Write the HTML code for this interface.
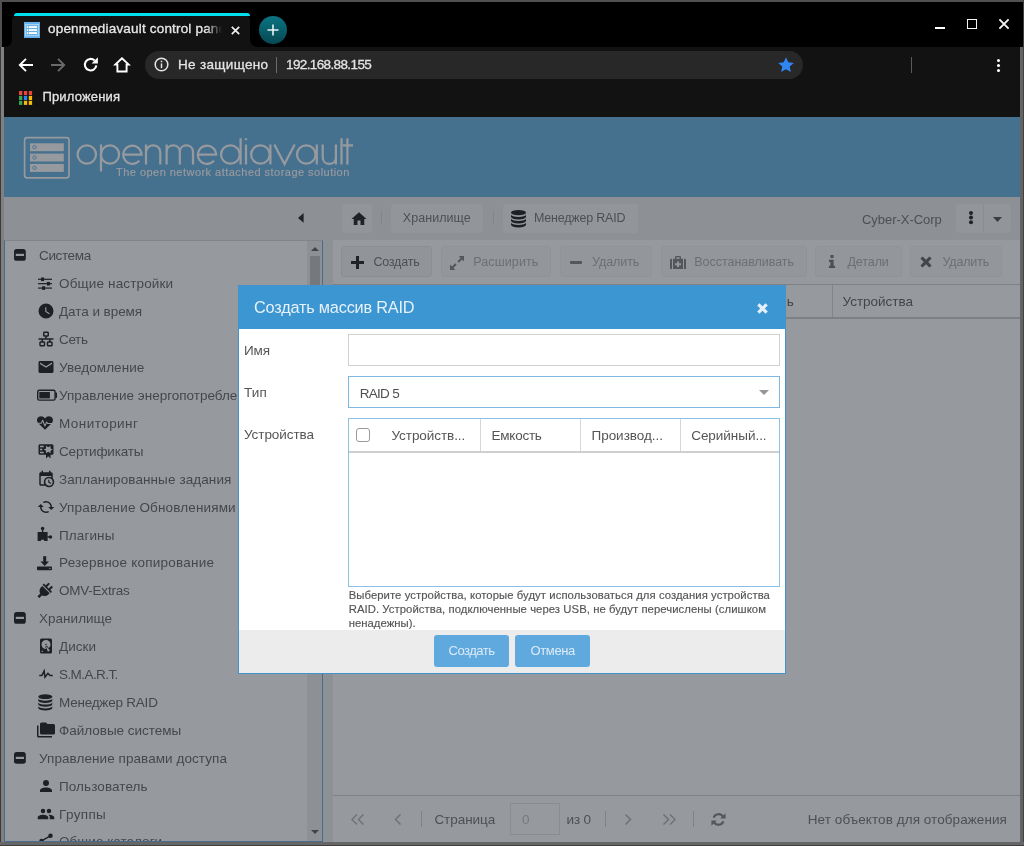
<!DOCTYPE html>
<html lang="ru">
<head>
<meta charset="utf-8">
<title>openmediavault control panel</title>
<style>
*{box-sizing:border-box;margin:0;padding:0}
html,body{width:1024px;height:846px;overflow:hidden}
body{background:#000;font-family:"Liberation Sans",sans-serif;font-size:13px;color:#404040;position:relative}
.abs{position:absolute}
#root{position:absolute;left:0;top:0;width:1024px;height:846px;filter:opacity(1);will-change:transform}
svg{display:block}
/* window frame */
#frame-l{left:0;top:47px;width:4px;height:799px;background:linear-gradient(to right,#3a3a3a 0,#3a3a3a 1px,#808080 1.1px)}
#frame-r{left:1020px;top:47px;width:4px;height:799px;background:#646464;border-right:1px solid #424242}
#frame-b{left:0;top:841.6px;width:1024px;height:4.4px;background:#666;border-bottom:1.1px solid #404040}
#frame-t{left:0;top:0;width:1024px;height:1.8px;background:#505050}
#frame-tl{left:0;top:0;width:1.8px;height:47px;background:#505050}
#frame-tr{left:1022.6px;top:0;width:1.4px;height:47px;background:#404040}
/* browser chrome */
#titlebar{left:0;top:2px;width:1024px;height:45px;background:#000}
#tab{left:12px;top:15px;width:238px;height:32px;background:#121212;border-radius:5px 5px 0 0}
#tabline{left:13.6px;top:12.8px;width:236px;height:3.5px;background:#00e0ee;border-radius:4px 4px 0 0}
#tabtitle{left:48px;top:21px;font-size:13.5px;color:#e8e8e8;-webkit-text-stroke:.3px #e8e8e8;letter-spacing:.18px;white-space:nowrap;width:175px;overflow:hidden;-webkit-mask-image:linear-gradient(to right,#000 158px,transparent 174px);mask-image:linear-gradient(to right,#000 158px,transparent 174px)}
#navbar{left:4px;top:47px;width:1016px;height:70px;background:#121212}
#omni{left:145px;top:51px;width:658px;height:28px;border-radius:14px;background:#282828}
.ctext{color:#e4e4e4;font-size:13.5px;white-space:nowrap;-webkit-text-stroke:.3px #e4e4e4}
/* page */
#page{left:4px;top:117px;width:1016px;height:724.6px;background:#ececec;overflow:hidden}
#hdr{left:0;top:0;width:1016px;height:79.6px;background:#5cacdf}
#bar{left:0;top:79.6px;width:1016px;height:43.4px;background:#ececec}
#side{left:0;top:123px;width:319px;height:601.8px;background:#fff;border:1px solid #5fa2dd;border-top-color:#d4d4d4;overflow:hidden}
#main{left:329px;top:123px;width:687px;height:602px;background:#fff;overflow:hidden}
#mask{left:0;top:0;width:1016px;height:725px;background:rgba(45,51,61,.5)}
/* tree */
.row{position:absolute;left:0;height:28px;width:303px;white-space:nowrap;font-size:13.6px;color:#404040;line-height:28px}
.row .t{position:absolute;left:54px;top:0}
.row.cat .t{left:34px}
.row .ic{position:absolute;left:32px;top:6px;width:16px;height:16px}
.row.cat .ic{left:9px;top:7px;width:13px;height:13px}
/* buttons */
.btn{position:absolute;height:31px;background:#f5f5f5;border:1px solid #e6e6e6;border-radius:3px;font-size:13px;color:#666;line-height:29px;white-space:nowrap}
.btn.dis{color:#a9a9a9}
/* modal */
#modal{left:233.7px;top:168.4px;width:548.6px;height:388.8px;background:#fff;border:1px solid #4392d0}
#mhead{left:0;top:0;width:546.6px;height:42.2px;background:#3c96d2}
#mfoot{left:0;top:343.8px;width:546.6px;height:43px;background:#ececec}
.lbl{position:absolute;left:6px;font-size:13.6px;color:#555}
.fld{position:absolute;left:110px;width:432px;height:32px;border:1px solid #cfcfcf;background:#fff}
.mbtn{position:absolute;top:350px;width:75px;height:32px;border-radius:3px;background:#5fa9de;color:#e4eff9;font-size:13.6px;text-align:center;line-height:32px}

.tx{position:absolute;white-space:nowrap;line-height:18px;height:18px}
.tb{position:absolute;background:#f5f5f5;border:1px solid #e6e6e6;border-radius:3px}
.tbb{border-color:#f6f6f6;background:#f6f6f6}
</style>
</head>
<body>
<div id="root">
<div id="titlebar" class="abs"></div>
<div id="frame-t" class="abs"></div><div id="frame-tl" class="abs"></div><div id="frame-tr" class="abs"></div>
<div id="tab" class="abs"></div><div id="tabline" class="abs"></div>
<div id="tabtitle" class="abs">openmediavault control panel</div>
<div id="navbar" class="abs"></div>
<div id="omni" class="abs"></div>

<!-- tab foot curves -->
<svg class="abs" style="left:3px;top:39px" width="10" height="8"><path d="M0 8 Q9 8 9 0 L10 0 L10 8 Z" fill="#121212"/></svg>
<svg class="abs" style="left:249px;top:39px" width="10" height="8"><path d="M10 8 Q1 8 1 0 L0 0 L0 8 Z" fill="#121212"/></svg>
<!-- favicon -->
<svg class="abs" style="left:24px;top:22px" width="16" height="16" viewBox="0 0 16 16"><rect width="16" height="16" fill="#62b0ec"/><rect x="1.4" y="2.4" width="13.2" height="11.4" fill="#7dbdee" stroke="#b4daf6" stroke-width=".8"/><rect x="2.4" y="3.3" width="11.2" height="9.6" fill="#67ade2"/><g fill="#fff"><rect x="2.9" y="4.1" width="1.1" height="1.8"/><rect x="4.7" y="4.1" width="8.3" height="1.8"/><rect x="2.9" y="7.1" width="1.1" height="1.8"/><rect x="4.7" y="7.1" width="8.3" height="1.8"/><rect x="2.9" y="10.1" width="1.1" height="1.9"/><rect x="4.7" y="10.1" width="8.3" height="1.9"/></g></svg>
<!-- tab close -->
<svg class="abs" style="left:231px;top:26px" width="9" height="9" viewBox="0 0 9 9"><path d="M0.8 0.8L8.2 8.2M8.2 0.8L0.8 8.2" stroke="#f0f0f0" stroke-width="1.7"/></svg>
<!-- new tab -->
<div class="abs" style="left:259px;top:16px;width:28px;height:28px;border-radius:14px;background:linear-gradient(#0b7482,#064853)"></div>
<svg class="abs" style="left:267px;top:24px" width="12" height="12" viewBox="0 0 12 12"><path d="M6 0.5V11.5M0.5 6H11.5" stroke="#e8f4f4" stroke-width="1.6"/></svg>
<!-- window controls -->
<div class="abs" style="left:935px;top:27px;width:10px;height:2px;background:#fff"></div>
<div class="abs" style="left:967px;top:19px;width:10px;height:10px;border:1.8px solid #f4f4f4"></div>
<svg class="abs" style="left:998px;top:18px" width="12" height="12" viewBox="0 0 12 12"><path d="M1.4 1.4L10.6 10.6M10.6 1.4L1.4 10.6" stroke="#f4f4f4" stroke-width="1.9"/></svg>
<!-- nav icons -->
<svg class="abs" style="left:18px;top:57px" width="16" height="16" viewBox="0 0 16 16"><path d="M15 8H2.5M8 1.8L1.8 8L8 14.2" fill="none" stroke="#fff" stroke-width="1.9"/></svg>
<svg class="abs" style="left:50px;top:57px" width="16" height="16" viewBox="0 0 16 16"><path d="M1 8H13.5M8 1.8L14.2 8L8 14.2" fill="none" stroke="#6a6a6a" stroke-width="1.9"/></svg>
<svg class="abs" style="left:81.6px;top:56.4px" width="17.4" height="17.4" viewBox="0 0 16 16"><path d="M13.2 8.6A5.3 5.3 0 1 1 11.6 4.1" fill="none" stroke="#fff" stroke-width="1.9"/><path d="M14.6 1.2V7H8.8Z" fill="#fff"/></svg>
<svg class="abs" style="left:113px;top:56px" width="18" height="17" viewBox="0 0 18 17"><path d="M9 2.2L2.3 8.6H4.4V15.5H13.6V8.6H15.7Z" fill="none" stroke="#fff" stroke-width="1.9" stroke-linejoin="miter"/></svg>
<!-- omnibox content -->
<svg class="abs" style="left:154.3px;top:57.4px" width="15" height="15" viewBox="0 0 14 14"><circle cx="7" cy="7" r="5.9" fill="none" stroke="#e4e4e4" stroke-width="1.45"/><rect x="6.3" y="6" width="1.4" height="4.4" fill="#e4e4e4"/><rect x="6.3" y="3.4" width="1.4" height="1.5" fill="#e4e4e4"/></svg>
<div class="abs ctext" id="t-sec" style="left:178px;top:57px;letter-spacing:.33px">Не защищено</div>
<div class="abs" style="left:276px;top:57px;width:1px;height:16px;background:#6a6a6a"></div>
<div class="abs ctext" id="t-url" style="left:286px;top:57px;letter-spacing:-.62px">192.168.88.155</div>
<svg class="abs" style="left:778px;top:57px" width="16" height="15" viewBox="0 0 16 15"><path d="M8 0.3L10.3 5.3L15.8 5.9L11.7 9.6L12.9 15L8 12.2L3.1 15L4.3 9.6L0.2 5.9L5.7 5.3Z" fill="#2f86f0"/></svg>
<div class="abs" style="left:911px;top:57px;width:1px;height:16px;background:#5a5a5a"></div>
<div class="abs" style="left:997px;top:59px;width:3px;height:3px;border-radius:2px;background:#fff;box-shadow:0 5px 0 #fff,0 10px 0 #fff"></div>
<!-- bookmarks -->
<svg class="abs" style="left:19px;top:90.8px" width="14" height="14.2" viewBox="0 0 14 14.2"><rect x="0.0" y="0.0" width="3.3" height="4.1" fill="#e8453c"/><rect x="4.9" y="0.0" width="3.3" height="4.1" fill="#e8453c"/><rect x="9.8" y="0.0" width="3.3" height="4.1" fill="#e8453c"/><rect x="0.0" y="4.9" width="3.3" height="4.1" fill="#35a853"/><rect x="4.9" y="4.9" width="3.3" height="4.1" fill="#2f86f0"/><rect x="9.8" y="4.9" width="3.3" height="4.1" fill="#f9bb05"/><rect x="0.0" y="9.8" width="3.3" height="4.1" fill="#35a853"/><rect x="4.9" y="9.8" width="3.3" height="4.1" fill="#f9bb05"/><rect x="9.8" y="9.8" width="3.3" height="4.1" fill="#f9bb05"/></svg>
<div class="abs ctext" id="t-apps" style="left:42.4px;top:89px;font-size:13px;letter-spacing:.17px">Приложения</div>
<div id="frame-l" class="abs"></div>
<div id="frame-r" class="abs"></div>
<div id="frame-b" class="abs"></div>

<div id="page" class="abs">
  <div id="hdr" class="abs">
<svg class="abs" style="left:0;top:0" width="400" height="80" viewBox="4 117 400 80" fill="none" stroke="#fff" stroke-width="2.25">
<rect x="24.6" y="137.6" width="44.4" height="40.2" rx="2.5" stroke-width="1.7"/>
<g stroke="none" fill="#fff"><rect x="30" y="143.3" width="33.8" height="7.9"/><rect x="30" y="153.6" width="33.8" height="7.9"/><rect x="30" y="163.9" width="33.8" height="8"/></g>
<g stroke="#5cacdf" stroke-width="0.9"><circle cx="34.5" cy="147.2" r="1.7"/><circle cx="34.5" cy="157.5" r="1.7"/><circle cx="34.5" cy="167.9" r="1.7"/></g>
<circle cx="86.8" cy="154.5" r="9.2"/>
<path d="M101 144.5V171.5"/><circle cx="110" cy="154.5" r="9.1"/>
<path d="M123.4 154.5H141.5A9.1 9.1 0 1 0 139.4 160.6"/>
<path d="M146 144.5V164.5M146 152.5C146 143 160.3 143 160.3 152.5V164.5"/>
<path d="M166.6 144.5V164.5M166.6 152C166.6 143.2 179.8 143.2 179.8 152V164.5M179.8 152C179.8 143.2 193 143.2 193 152V164.5"/>
<path d="M198 154.5H216.1A9.1 9.1 0 1 0 214 160.6"/>
<ellipse cx="230.4" cy="154.5" rx="9.4" ry="9.2"/><path d="M240.6 138.2V164.5"/>
<path d="M246 144.5V164.5M246 138.2V140.2"/>
<ellipse cx="260.4" cy="154.5" rx="9.3" ry="9.2"/><path d="M270.4 144.5V164.5"/>
<path d="M274.3 144.5L284.5 164L294.7 144.5"/>
<ellipse cx="306.3" cy="154.5" rx="9.3" ry="9.2"/><path d="M316.8 144.5V164.5"/>
<path d="M322.7 144.5V157C322.7 166.3 335.9 166.3 335.9 157V144.5M335.9 157V164.5"/>
<path d="M341.5 138.2V164.5"/>
<path d="M347.4 138.2V164.5M342.6 145.3H353"/>
</svg>
<div class="abs" id="tagline" style="left:112px;top:49px;font-size:11px;color:#fff;white-space:nowrap;-webkit-text-stroke:.12px #fff;letter-spacing:.47px">The open network attached storage solution</div>
</div>
  <div id="bar" class="abs"></div>
<svg class="abs" style="left:294.3px;top:96px" width="6" height="10"><path d="M5.6 0L0 4.9L5.6 9.8Z" fill="#111"/></svg>
<div class="tb tbb" style="left:338px;top:86.5px;width:30px;height:29.5px"></div>
<svg class="abs" style="left:346px;top:92.5px" width="18" height="18" viewBox="0 0 24 24"><path fill="#111" fill-rule="evenodd"  d="M10,20V14H14V20H19V12H22L12,3L2,12H5V20H10Z"/></svg>
<div class="abs" style="left:377px;top:94px;width:1px;height:14px;background:#d6d6d6"></div>
<div class="tb tbb" style="left:387px;top:86.5px;width:92px;height:29.5px"></div>
<span id="x23" class="tx " style="left:398.8px;top:92px;font-size:12.5px;color:#6b6b6b;letter-spacing:0.056px;">Хранилище</span>
<div class="abs" style="left:489px;top:94px;width:1px;height:14px;background:#d6d6d6"></div>
<div class="tb tbb" style="left:499px;top:86.5px;width:135px;height:29.5px"></div>
<svg class="abs" style="left:506.5px;top:93px" width="15" height="18" viewBox="0 0 15 18"><g fill="#0c0c0c"><ellipse cx="7.5" cy="2.7" rx="7.5" ry="2.6"/><path d="M0 4.5A7.5 2.6 0 0 0 15 4.5V6.8A7.5 2.6 0 0 1 0 6.8Z"/><path d="M0 8.5A7.5 2.6 0 0 0 15 8.5V10.8A7.5 2.6 0 0 1 0 10.8Z"/><path d="M0 12.5A7.5 2.6 0 0 0 15 12.5V14.8A7.5 2.6 0 0 1 0 14.8Z"/></g></svg>
<span id="x24" class="tx " style="left:530px;top:92px;font-size:12.5px;color:#6b6b6b;letter-spacing:-0.206px;">Менеджер RAID</span>
<span id="x25" class="tx " style="left:858px;top:93.6px;font-size:13px;color:#6b6b6b;letter-spacing:-0.032px;">Cyber-X-Corp</span>
<div class="tb tbb" style="left:952px;top:86.5px;width:55px;height:29.5px"></div>
<div class="abs" style="left:979px;top:87px;width:1px;height:28px;background:#e4e4e4"></div>
<div class="abs" style="left:965.3px;top:94.19999999999999px;width:3.6px;height:3.6px;border-radius:2px;background:#111;box-shadow:0 4.6px 0 #111,0 9.2px 0 #111"></div>
<svg class="abs" style="left:989px;top:99.5px" width="9" height="5"><path d="M0 0L4.5 5L9 0Z" fill="#444"/></svg>
  <div id="side" class="abs"><svg class="abs" style="left:9px;top:8.30px" width="12" height="12"><rect width="11.8" height="11.8" rx="2.6" fill="#0c0c0c"/><rect x="1.8" y="4.8" width="8.2" height="2.2" fill="#fff"/></svg>
<span id="x1" class="tx " style="left:34px;top:6.300000000000011px;font-size:13.5px;color:#5a5a5a;letter-spacing:-0.368px;">Система</span>
<svg class="abs" style="left:25px;top:28.420000000000016px" width="30" height="28" viewBox="30 269.42 30 28"><g fill="#0c0c0c"><rect x="38" y="279.10" width="14" height="1.2"/><rect x="41.10" y="277.90" width="3" height="3.6"/><rect x="38" y="283.50" width="14" height="1.2"/><rect x="46.90" y="282.30" width="3" height="3.6"/><rect x="38" y="287.90" width="14" height="1.2"/><rect x="42.10" y="286.70" width="3" height="3.6"/></g></svg>
<span id="x2" class="tx " style="left:54px;top:34.22000000000003px;font-size:13.5px;color:#5a5a5a;letter-spacing:0.150px;">Общие настройки</span>
<svg class="abs" style="left:31.5px;top:61.34000000000003px" width="18" height="18" viewBox="0 0 24 24"><path fill="#0c0c0c" fill-rule="evenodd"  d="M12,2A10,10 0 0,0 2,12A10,10 0 0,0 12,22A10,10 0 0,0 22,12A10,10 0 0,0 12,2M16.2,16.2L11,13V7H12.5V12.2L17,14.9L16.2,16.2Z"/></svg>
<span id="x3" class="tx " style="left:54px;top:62.14000000000004px;font-size:13.5px;color:#5a5a5a;letter-spacing:-0.052px;">Дата и время</span>
<svg class="abs" style="left:31.5px;top:89.25999999999999px" width="18" height="18" viewBox="0 0 24 24"><path fill="#0c0c0c" fill-rule="evenodd"  d="M10,2C8.89,2 8,2.89 8,4V7C8,8.11 8.89,9 10,9H11V11H2V13H6V15H5C3.89,15 3,15.89 3,17V20C3,21.11 3.89,22 5,22H9C10.11,22 11,21.11 11,20V17C11,15.89 10.11,15 9,15H8V13H16V15H15C13.89,15 13,15.89 13,17V20C13,21.11 13.89,22 15,22H19C20.11,22 21,21.11 21,20V17C21,15.89 20.11,15 19,15H18V13H22V11H13V9H14C15.11,9 16,8.11 16,7V4C16,2.89 15.11,2 14,2H10M10,4H14V7H10V4M5,17H9V20H5V17M15,17H19V20H15V17Z"/></svg>
<span id="x4" class="tx " style="left:54px;top:90.06px;font-size:13.5px;color:#5a5a5a;letter-spacing:-0.358px;">Сеть</span>
<svg class="abs" style="left:31.5px;top:117.18px" width="18" height="18" viewBox="0 0 24 24"><path fill="#0c0c0c" fill-rule="evenodd"  d="M20,8L12,13L4,8V6L12,11L20,6M20,4H4C2.89,4 2,4.89 2,6V18A2,2 0 0,0 4,20H20A2,2 0 0,0 22,18V6C22,4.89 21.1,4 20,4Z"/></svg>
<span id="x5" class="tx " style="left:54px;top:117.98000000000002px;font-size:13.5px;color:#5a5a5a;letter-spacing:0.072px;">Уведомление</span>
<svg class="abs" style="left:25px;top:140.10000000000002px" width="30" height="28" viewBox="30 381.1 30 28"><rect x="37.7" y="390.4" width="17.4" height="9.8" rx="1.6" fill="none" stroke="#0c0c0c" stroke-width="1.4"/><rect x="39.3" y="392.1" width="10.6" height="6.4" fill="#0c0c0c"/><rect x="55.4" y="392.6" width="1.6" height="5.4" rx=".6" fill="#0c0c0c"/></svg>
<span id="x6" class="tx " style="left:54px;top:145.90000000000003px;font-size:13.5px;color:#5a5a5a;">Управление энергопотреблением</span>
<svg class="abs" style="left:25px;top:168.01999999999998px" width="30" height="28" viewBox="30 409.02 30 28"><g transform="translate(37 416.0)"><path fill="#0c0c0c" d="M8 13.8L1.3 7.3C-.7 5.2-.3 2 2 .8C4-.3 6.6.4 8 2.5C9.4.4 12-.3 14 .8C16.3 2 16.7 5.2 14.7 7.3Z"/><path d="M-.5 7.3H4.3L5.7 4.3L7.9 10L9.7 6.1L10.6 7.6H16.5" fill="none" stroke="#fff" stroke-width="1.05" stroke-linejoin="round"/></g></svg>
<span id="x7" class="tx " style="left:54px;top:173.82px;font-size:13.5px;color:#5a5a5a;letter-spacing:0.453px;">Мониторинг</span>
<svg class="abs" style="left:31.5px;top:200.94px" width="18" height="18" viewBox="0 0 24 24"><path fill="#0c0c0c" fill-rule="evenodd"  d="M4,3C2.89,3 2,3.89 2,5V15A2,2 0 0,0 4,17H12V22L15,19L18,22V17H20A2,2 0 0,0 22,15V8L22,6V5A2,2 0 0,0 20,3H16V3H4M12,5L15,7L18,5V8.5L21,10L18,11.5V15L15,13L12,15V11.5L9,10L12,8.5V5M4,5H9V7H4V5M4,9H7V11H4V9M4,13H9V15H4V13Z"/></svg>
<span id="x8" class="tx " style="left:54px;top:201.74px;font-size:13.5px;color:#5a5a5a;letter-spacing:-0.160px;">Сертификаты</span>
<svg class="abs" style="left:31.5px;top:228.86px" width="18" height="18" viewBox="0 0 24 24"><path fill="#0c0c0c" fill-rule="evenodd"  d="M15,13H16.5V15.82L18.94,17.23L18.19,18.53L15,16.69V13M19,8H5V19H9.67C9.24,18.09 9,17.07 9,16A7,7 0 0,1 16,9C17.07,9 18.09,9.24 19,9.67V8M5,21C3.89,21 3,20.1 3,19V5C3,3.89 3.89,3 5,3H6V1H8V3H16V1H18V3H19A2,2 0 0,1 21,5V11.1C22.24,12.36 23,14.09 23,16A7,7 0 0,1 16,23C14.09,23 12.36,22.24 11.1,21H5M16,11.15A4.85,4.85 0 0,0 11.15,16C11.15,18.68 13.32,20.85 16,20.85A4.85,4.85 0 0,0 20.85,16C20.85,13.32 18.68,11.15 16,11.15Z"/></svg>
<span id="x9" class="tx " style="left:54px;top:229.66000000000003px;font-size:13.5px;color:#5a5a5a;letter-spacing:0.101px;">Запланированные задания</span>
<svg class="abs" style="left:31.5px;top:256.78000000000003px" width="18" height="18" viewBox="0 0 24 24"><path fill="#0c0c0c" fill-rule="evenodd" transform="translate(24 0) scale(-1 1)" d="M19,8L15,12H18A6,6 0 0,1 12,18C11,18 10.03,17.75 9.2,17.3L7.74,18.76C8.97,19.54 10.43,20 12,20A8,8 0 0,0 20,12H23M6,12A6,6 0 0,1 12,6C13,6 13.97,6.25 14.8,6.7L16.26,5.24C15.03,4.46 13.57,4 12,4A8,8 0 0,0 4,12H1L5,16L9,12"/></svg>
<span id="x10" class="tx " style="left:54px;top:257.58000000000004px;font-size:13.5px;color:#5a5a5a;letter-spacing:0.149px;">Управление Обновлениями</span>
<svg class="abs" style="left:25px;top:279.70000000000005px" width="30" height="28" viewBox="30 520.7 30 28"><g transform="translate(0 0.0)" fill="#0c0c0c"><rect x="37.6" y="531.7" width="10" height="9"/><circle cx="42.6" cy="528.3" r="1.75"/><rect x="41.9" y="528.5" width="1.4" height="3.5"/><circle cx="50.5" cy="536.6" r="1.75"/><rect x="47.4" y="535.9" width="3" height="1.4"/><circle cx="42.6" cy="541" r="1.9" fill="#fff"/></g></svg>
<span id="x11" class="tx " style="left:54px;top:285.5px;font-size:13.5px;color:#5a5a5a;letter-spacing:0.112px;">Плагины</span>
<svg class="abs" style="left:25px;top:307.62px" width="30" height="28" viewBox="30 548.62 30 28"><g transform="translate(0 0.0)" fill="#0c0c0c"><rect x="43.2" y="555.8" width="3" height="6"/><path d="M40.4 561.2H49L44.7 565.5Z"/><rect x="37" y="566" width="15" height="3.9" rx=".7"/><circle cx="49.9" cy="568" r=".65" fill="#fff"/></g></svg>
<span id="x12" class="tx " style="left:54px;top:313.41999999999996px;font-size:13.5px;color:#5a5a5a;letter-spacing:0.222px;">Резервное копирование</span>
<svg class="abs" style="left:25px;top:335.53999999999996px" width="30" height="28" viewBox="30 576.54 30 28"><rect x="37" y="581.9399999999999" width="16" height="16" fill="#fff" opacity=".1"/><g transform="translate(45.4 589.74) rotate(45)" fill="#0c0c0c"><rect x="-5.8" y="-3.6" width="11.6" height="1.8"/><path d="M-5.2 -.9H5.2V1A5.2 5.2 0 0 1 -5.2 1Z"/><rect x="-1.35" y="5.4" width="2.7" height="4.6" rx=".5"/><rect x="-3.2" y="-7.7" width="2.1" height="4.6" rx=".9"/><rect x="1.1" y="-7.7" width="2.1" height="4.6" rx=".9"/></g></svg>
<span id="x13" class="tx " style="left:54px;top:341.3399999999999px;font-size:13.5px;color:#5a5a5a;letter-spacing:-0.227px;">OMV-Extras</span>
<svg class="abs" style="left:9px;top:371.26px" width="12" height="12"><rect width="11.8" height="11.8" rx="2.6" fill="#0c0c0c"/><rect x="1.8" y="4.8" width="8.2" height="2.2" fill="#fff"/></svg>
<span id="x14" class="tx " style="left:34px;top:369.26px;font-size:13.5px;color:#5a5a5a;letter-spacing:0.022px;">Хранилище</span>
<svg class="abs" style="left:31.5px;top:396.38px" width="18" height="18" viewBox="0 0 24 24"><path fill="#0c0c0c" fill-rule="evenodd"  d="M6,2H18A2,2 0 0,1 20,4V20A2,2 0 0,1 18,22H6A2,2 0 0,1 4,20V4A2,2 0 0,1 6,2M12,4A6,6 0 0,0 6,10C6,13.31 8.69,16 12.1,16L11.22,13.77C10.95,13.29 11.11,12.68 11.59,12.4L12.45,11.9C12.93,11.63 13.54,11.79 13.82,12.27L15.74,14.69C17.12,13.59 18,11.9 18,10A6,6 0 0,0 12,4M12,9A1,1 0 0,1 13,10A1,1 0 0,1 12,11A1,1 0 0,1 11,10A1,1 0 0,1 12,9M7,18A1,1 0 0,0 6,19A1,1 0 0,0 7,20A1,1 0 0,0 8,19A1,1 0 0,0 7,18M12.09,13.27L14.58,19.58L17.17,18.08L12.95,12.77L12.09,13.27Z"/></svg>
<span id="x15" class="tx " style="left:54px;top:397.17999999999995px;font-size:13.5px;color:#5a5a5a;letter-spacing:0.062px;">Диски</span>
<svg class="abs" style="left:31.5px;top:424.29999999999995px" width="18" height="18" viewBox="0 0 24 24"><path fill="#0c0c0c" fill-rule="evenodd"  d="M3,13H5.79L10.1,4.79L11.28,13.75L14.5,9.66L17.83,13H21V15H17L14.67,12.67L9.92,18.73L8.94,11.27L7,15H3V13Z"/></svg>
<span id="x16" class="tx " style="left:54px;top:425.0999999999999px;font-size:13.5px;color:#5a5a5a;letter-spacing:-0.572px;">S.M.A.R.T.</span>
<svg class="abs" style="left:25px;top:447.22px" width="30" height="28" viewBox="30 688.22 30 28"><g transform="translate(0 0.0)" fill="#0c0c0c"><ellipse cx="45.3" cy="696.9" rx="7" ry="2.4"/><path d="M38.3 698.6A7 2.4 0 0 0 52.3 698.6V700.7A7 2.4 0 0 1 38.3 700.7Z"/><path d="M38.3 702.4A7 2.4 0 0 0 52.3 702.4V704.5A7 2.4 0 0 1 38.3 704.5Z"/><path d="M38.3 706.2A7 2.4 0 0 0 52.3 706.2V708.3000000000001A7 2.4 0 0 1 38.3 708.3000000000001Z"/></g></svg>
<span id="x17" class="tx " style="left:54px;top:453.02px;font-size:13.5px;color:#5a5a5a;letter-spacing:-0.217px;">Менеджер RAID</span>
<svg class="abs" style="left:31.5px;top:480.1400000000001px" width="18" height="18" viewBox="0 0 24 24"><path fill="#0c0c0c" fill-rule="evenodd"  d="M22,4H14L12,2H6A2,2 0 0,0 4,4V16A2,2 0 0,0 6,18H22A2,2 0 0,0 24,16V6A2,2 0 0,0 22,4M2,6H0V11H0V20A2,2 0 0,0 2,22H20V20H2V6Z"/></svg>
<span id="x18" class="tx " style="left:54px;top:480.94000000000005px;font-size:13.5px;color:#5a5a5a;letter-spacing:-0.016px;">Файловые системы</span>
<svg class="abs" style="left:9px;top:510.86px" width="12" height="12"><rect width="11.8" height="11.8" rx="2.6" fill="#0c0c0c"/><rect x="1.8" y="4.8" width="8.2" height="2.2" fill="#fff"/></svg>
<span id="x19" class="tx " style="left:34px;top:508.86px;font-size:13.5px;color:#5a5a5a;letter-spacing:0.067px;">Управление правами доступа</span>
<svg class="abs" style="left:31.5px;top:535.98px" width="18" height="18" viewBox="0 0 24 24"><path fill="#0c0c0c" fill-rule="evenodd"  d="M12,4A4,4 0 0,1 16,8A4,4 0 0,1 12,12A4,4 0 0,1 8,8A4,4 0 0,1 12,4M12,14C16.42,14 20,15.79 20,18V20H4V18C4,15.79 7.58,14 12,14Z"/></svg>
<span id="x20" class="tx " style="left:54px;top:536.78px;font-size:13.5px;color:#5a5a5a;letter-spacing:0.091px;">Пользователь</span>
<svg class="abs" style="left:31.5px;top:563.9000000000001px" width="18" height="18" viewBox="0 0 24 24"><path fill="#0c0c0c" fill-rule="evenodd"  d="M16,13C15.71,13 15.38,13 15.03,13.05C16.19,13.89 17,15 17,16.5V19H23V16.5C23,14.17 18.33,13 16,13M8,13C5.67,13 1,14.17 1,16.5V19H15V16.5C15,14.17 10.33,13 8,13M8,11A3,3 0 0,0 11,8A3,3 0 0,0 8,5A3,3 0 0,0 5,8A3,3 0 0,0 8,11M16,11A3,3 0 0,0 19,8A3,3 0 0,0 16,5A3,3 0 0,0 13,8A3,3 0 0,0 16,11Z"/></svg>
<span id="x21" class="tx " style="left:54px;top:564.7px;font-size:13.5px;color:#5a5a5a;letter-spacing:0.369px;">Группы</span>
<svg class="abs" style="left:31.5px;top:590.9200000000001px" width="18" height="18" viewBox="0 0 24 24"><path fill="#0c0c0c" fill-rule="evenodd"  d="M18,16.08C17.24,16.08 16.56,16.38 16.04,16.85L8.91,12.7C8.96,12.47 9,12.24 9,12C9,11.76 8.96,11.53 8.91,11.3L15.96,7.19C16.5,7.69 17.21,8 18,8A3,3 0 0,0 21,5A3,3 0 0,0 18,2A3,3 0 0,0 15,5C15,5.24 15.04,5.47 15.09,5.7L8.04,9.81C7.5,9.31 6.79,9 6,9A3,3 0 0,0 3,12A3,3 0 0,0 6,15C6.79,15 7.5,14.69 8.04,14.19L15.16,18.34C15.11,18.55 15.08,18.77 15.08,19C15.08,20.61 16.39,21.91 18,21.91C19.61,21.91 20.92,20.61 20.92,19A2.92,2.92 0 0,0 18,16.08Z"/></svg>
<span id="x22" class="tx " style="left:54px;top:591.72px;font-size:13.5px;color:#5a5a5a;">Общие каталоги</span>
<div class="abs" style="left:302px;top:0;width:15px;height:600px;background:#ededed"></div>
<div class="abs" style="left:305px;top:15px;width:10px;height:305px;background:#bdbdbd"></div>
<svg class="abs" style="left:306px;top:6px" width="8" height="4"><path d="M0 4L4 0L8 4Z" fill="#555"/></svg>
<svg class="abs" style="left:306px;top:589px" width="8" height="4"><path d="M0 0L4 4L8 0Z" fill="#555"/></svg></div>
  <div id="main" class="abs"><div class="abs" style="left:0;top:44px;width:687px;height:1px;background:#cfcfcf"></div>
<div class="tb" style="left:8.399999999999977px;top:6px;width:90.9px;height:31.4px"></div>
<svg class="abs" style="left:18px;top:15.599999999999994px" width="13" height="13" viewBox="0 0 12 12"><path d="M4.6 0H7.4V4.6H12V7.4H7.4V12H4.6V7.4H0V4.6H4.6Z" fill="#111"/></svg>
<span id="x26" class="tx " style="left:40.39999999999998px;top:13px;font-size:12.5px;color:#6b6b6b;letter-spacing:-0.202px;">Создать</span>
<div class="tb" style="left:108.19999999999999px;top:6px;width:110.1px;height:31.4px;background:#f9f9f9;border-color:#f0f0f0"></div>
<svg class="abs" style="left:117.19999999999999px;top:15.599999999999994px" width="14" height="14" viewBox="0 0 14 14"><g fill="#787878" stroke="#787878"><path d="M14 0V5.4L8.6 0Z" stroke="none"/><path d="M0 14V8.6L5.4 14Z" stroke="none"/><path d="M8.1 5.9L11.6 2.4M5.9 8.1L2.4 11.6" stroke-width="2.1" fill="none"/></g></svg>
<span id="x27" class="tx " style="left:140.2px;top:13px;font-size:12.5px;color:#a9a9a9;letter-spacing:0.110px;">Расширить</span>
<div class="tb" style="left:226.69999999999993px;top:6px;width:92.4px;height:31.4px;background:#f9f9f9;border-color:#f0f0f0"></div>
<div class="abs" style="left:236.5px;top:20.5px;width:12.5px;height:3px;background:#787878;border-radius:1px"></div>
<span id="x28" class="tx " style="left:259px;top:13px;font-size:12.5px;color:#a9a9a9;letter-spacing:-0.062px;">Удалить</span>
<div class="tb" style="left:328.29999999999995px;top:6px;width:145.29999999999998px;height:31.4px;background:#f9f9f9;border-color:#f0f0f0"></div>
<svg class="abs" style="left:336.70000000000005px;top:15.599999999999994px" width="16" height="13.8" viewBox="0 0 16 15" preserveAspectRatio="none"><path fill-rule="evenodd" d="M0 4.5C0 3.7 .6 3 1.4 3H2V15H1.4C.6 15 0 14.3 0 13.5ZM14 3H14.6C15.4 3 16 3.7 16 4.5V13.5C16 14.3 15.4 15 14.6 15H14ZM3 3H5V1.4C5 .6 5.6 0 6.4 0H9.6C10.4 0 11 .6 11 1.4V3H13V15H3ZM6.3 3H9.7V1.3H6.3ZM7 6V8H5V10H7V12H9V10H11V8H9V6Z" fill="#787878"/></svg>
<span id="x29" class="tx " style="left:361.29999999999995px;top:13px;font-size:12.5px;color:#a9a9a9;letter-spacing:-0.036px;">Восстанавливать</span>
<div class="tb" style="left:481.79999999999995px;top:6px;width:87.00000000000003px;height:31.4px;background:#f9f9f9;border-color:#f0f0f0"></div>
<svg class="abs" style="left:496px;top:15px" width="6" height="13" viewBox="0 0 6 13"><path d="M1.5 0H4.5V3H1.5ZM0 4.8H4.6V10.8H6V13H0V10.8H1.4V7H0Z" fill="#6a6a6a"/></svg>
<span id="x30" class="tx " style="left:514.4px;top:13px;font-size:12.5px;color:#a9a9a9;letter-spacing:-0.071px;">Детали</span>
<div class="tb" style="left:576.8px;top:6px;width:92.60000000000005px;height:31.4px;background:#f9f9f9;border-color:#f0f0f0"></div>
<svg class="abs" style="left:587px;top:16px" width="12" height="12" viewBox="0 0 12 12"><path d="M2.6 .4L6 3.8L9.4 .4L11.6 2.6L8.2 6L11.6 9.4L9.4 11.6L6 8.2L2.6 11.6L.4 9.4L3.8 6L.4 2.6Z" fill="#565656"/></svg>
<span id="x31" class="tx " style="left:609.4px;top:13px;font-size:12.5px;color:#a9a9a9;letter-spacing:-0.133px;">Удалить</span>
<div class="abs" style="left:0;top:77px;width:687px;height:2px;background:#cdcdcd"></div>
<div class="abs" style="left:498.5px;top:45px;width:1px;height:32px;background:#d4d4d4"></div>
<span id="x32" class="tx " style="left:509.5px;top:52.5px;font-size:13.5px;color:#555;letter-spacing:-0.013px;">Устройства</span>
<span id="x33" class="tx " style="left:453.79999999999995px;top:52.5px;font-size:13.5px;color:#555;">ь</span>
<div class="abs" style="left:0;top:555px;width:687px;height:1px;background:#cfcfcf"></div>
<svg class="abs" style="left:18px;top:574px" width="14" height="11"><path d="M6 .5L1 5.5L6 10.5M12.5 .5L7.5 5.5L12.5 10.5" fill="none" stroke="#b0b0b0" stroke-width="1.5"/></svg>
<svg class="abs" style="left:61px;top:574px" width="8" height="11"><path d="M6.5 .5L1.5 5.5L6.5 10.5" fill="none" stroke="#b0b0b0" stroke-width="1.5"/></svg>
<div class="abs" style="left:88px;top:571px;width:1px;height:16px;background:#d0d0d0"></div>
<span id="x34" class="tx " style="left:101.39999999999998px;top:570.7px;font-size:13.5px;color:#6b6b6b;letter-spacing:-0.048px;">Страница</span>
<div class="abs" style="left:177px;top:563.3px;width:50px;height:31.5px;border:1px solid #e4e4e4;background:#fff"></div>
<span id="x35" class="tx " style="left:189px;top:570.6px;font-size:13.5px;color:#c0c0c0;">0</span>
<span id="x36" class="tx " style="left:233.60000000000002px;top:570.7px;font-size:13.5px;color:#6b6b6b;letter-spacing:-0.225px;">из 0</span>
<div class="abs" style="left:271.5px;top:571px;width:1px;height:16px;background:#d0d0d0"></div>
<svg class="abs" style="left:291px;top:574px" width="8" height="11"><path d="M1.5 .5L6.5 5.5L1.5 10.5" fill="none" stroke="#b0b0b0" stroke-width="1.5"/></svg>
<svg class="abs" style="left:328.5px;top:574px" width="14" height="11"><path d="M1.5 .5L6.5 5.5L1.5 10.5M8 .5L13 5.5L8 10.5" fill="none" stroke="#b0b0b0" stroke-width="1.5"/></svg>
<div class="abs" style="left:360px;top:571px;width:1px;height:16px;background:#d0d0d0"></div>
<svg class="abs" style="left:378px;top:572px" width="15" height="15" viewBox="0 0 15 15"><path d="M12.3 5.2A5.3 5.3 0 0 0 2.6 5.6M2.7 9.8A5.3 5.3 0 0 0 12.4 9.4" fill="none" stroke="#7a7a7a" stroke-width="2.2"/><path d="M14.6 1.2V6.6H9.2ZM.4 13.8V8.4H5.8Z" fill="#7a7a7a"/></svg>
<span id="x37" class="tx " style="left:474.79999999999995px;top:570.7px;font-size:13.5px;color:#6b6b6b;letter-spacing:0.072px;">Нет объектов для отображения</span></div>
  <div id="mask" class="abs"></div>
  <div id="modal" class="abs"><div id="mhead" class="abs"></div>
<div id="mfoot" class="abs"></div>
<span id="x38" class="tx " style="left:15.300000000000011px;top:10.600000000000023px;font-size:16.3px;color:#e6f1f9;letter-spacing:-0.194px;line-height:20px;height:20px;">Создать массив RAID</span>
<svg class="abs" style="left:518.3px;top:16.80000000000001px" width="11" height="11" viewBox="0 0 12 12"><path d="M2.7 .2L6 3.5L9.3 .2L11.8 2.7L8.5 6L11.8 9.3L9.3 11.8L6 8.5L2.7 11.8L.2 9.3L3.5 6L.2 2.7Z" fill="#e3eff9"/></svg>
<span id="x39" class="tx " style="left:5.300000000000011px;top:55.60000000000002px;font-size:13.5px;color:#555;letter-spacing:-0.166px;">Имя</span>
<span id="x40" class="tx " style="left:5.300000000000011px;top:98.10000000000002px;font-size:13.5px;color:#555;letter-spacing:0.195px;">Тип</span>
<span id="x41" class="tx " style="left:5.300000000000011px;top:140.10000000000002px;font-size:13.5px;color:#555;letter-spacing:-0.062px;">Устройства</span>
<div class="abs" style="left:109.30000000000001px;top:47.60000000000002px;width:432px;height:32px;border:1px solid #d0d0d0;background:#fff"></div>
<div class="abs" style="left:109.30000000000001px;top:89.60000000000002px;width:432px;height:32px;border:1px solid #7fb9e3;background:#fff"></div>
<span id="x42" class="tx " style="left:121.0px;top:98.60000000000002px;font-size:13.5px;color:#505050;letter-spacing:-0.703px;">RAID 5</span>
<svg class="abs" style="left:520.3px;top:103.60000000000002px" width="10" height="5"><path d="M0 0L5 5L10 0Z" fill="#969696"/></svg>
<div class="abs" style="left:109.30000000000001px;top:131.60000000000002px;width:432px;height:169px;border:1px solid #8cc1e7;background:#fff"></div>
<div class="abs" style="left:110.30000000000001px;top:164.60000000000002px;width:430px;height:2px;background:#cfcfcf"></div>
<div class="abs" style="left:241.3px;top:132.60000000000002px;width:1px;height:32px;background:#d6d6d6"></div>
<div class="abs" style="left:341.3px;top:132.60000000000002px;width:1px;height:32px;background:#d6d6d6"></div>
<div class="abs" style="left:441.3px;top:132.60000000000002px;width:1px;height:32px;background:#d6d6d6"></div>
<div class="abs" style="left:117.30000000000001px;top:141.60000000000002px;width:14.5px;height:14px;border:1px solid #9a9a9a;border-radius:3px;background:#fff"></div>
<span id="x43" class="tx " style="left:152.8px;top:140.90000000000003px;font-size:13.5px;color:#555;letter-spacing:-0.069px;">Устройств...</span>
<span id="x44" class="tx " style="left:252.8px;top:140.90000000000003px;font-size:13.5px;color:#555;letter-spacing:-0.233px;">Емкость</span>
<span id="x45" class="tx " style="left:352.8px;top:140.90000000000003px;font-size:13.5px;color:#555;letter-spacing:-0.028px;">Производ...</span>
<span id="x46" class="tx " style="left:452.50000000000006px;top:140.90000000000003px;font-size:13.5px;color:#555;letter-spacing:-0.037px;">Серийный...</span>
<span id="x47" class="tx " style="left:110.0px;top:302.1px;font-size:11.3px;color:#555;letter-spacing:0.071px;line-height:14px;height:14px;-webkit-text-stroke:.15px #555;">Выберите устройства, которые будут использоваться для создания устройства</span>
<span id="x48" class="tx " style="left:110.0px;top:315.9px;font-size:11.3px;color:#555;letter-spacing:0.064px;line-height:14px;height:14px;-webkit-text-stroke:.15px #555;">RAID. Устройства, подключенные через USB, не будут перечислены (слишком</span>
<span id="x49" class="tx " style="left:110.0px;top:329.6px;font-size:11.3px;color:#555;letter-spacing:0.036px;line-height:14px;height:14px;-webkit-text-stroke:.15px #555;">ненадежны).</span>
<div class="abs" style="left:195.3px;top:348.6px;width:75px;height:32px;border-radius:3px;background:#5fa9de"></div>
<div class="abs" style="left:276.3px;top:348.6px;width:75px;height:32px;border-radius:3px;background:#5fa9de"></div>
<span id="x50" class="tx " style="left:209.8px;top:355.6px;font-size:13px;color:#dcebf7;letter-spacing:-0.487px;">Создать</span>
<span id="x51" class="tx " style="left:291.8px;top:355.6px;font-size:13px;color:#dcebf7;letter-spacing:-0.359px;">Отмена</span></div>
</div>
</div>
</body>
</html>
